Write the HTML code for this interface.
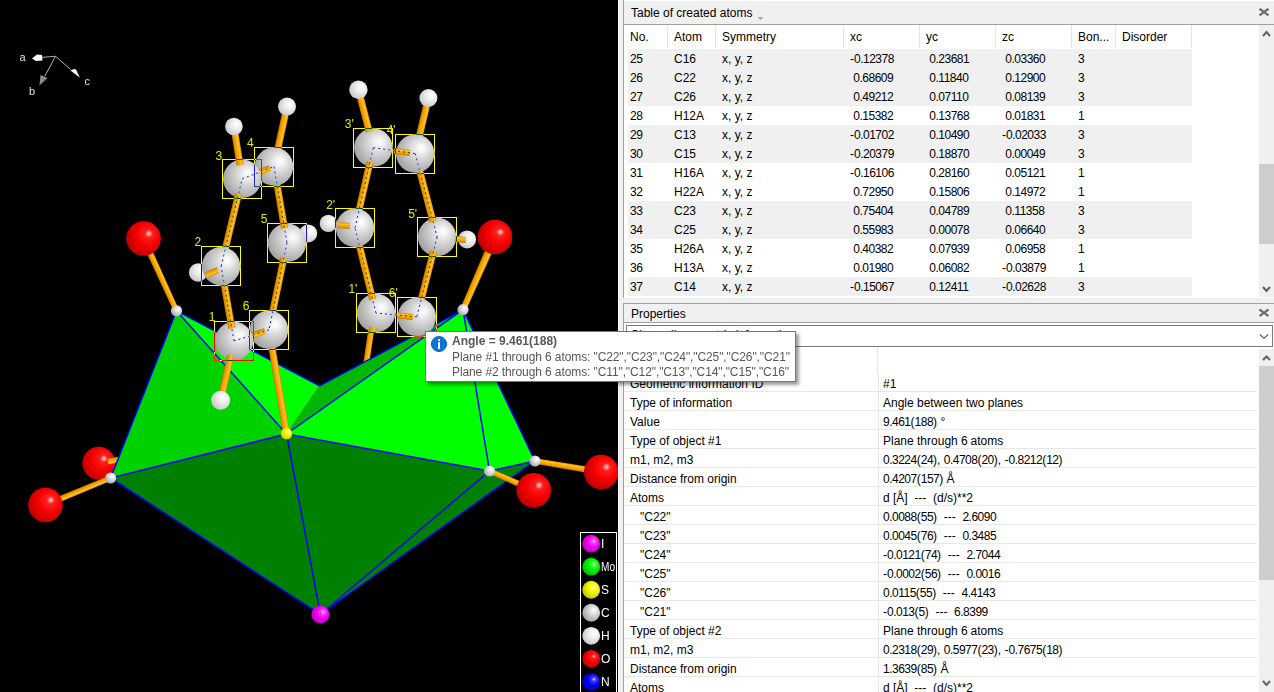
<!DOCTYPE html>
<html><head><meta charset="utf-8"><style>
html,body{margin:0;padding:0}
body{width:1274px;height:692px;overflow:hidden;position:relative;background:#f0f0f0;font-family:"Liberation Sans",sans-serif}
#view{position:absolute;left:0;top:0;width:618px;height:692px;background:#000;overflow:hidden}
.t{position:absolute;font-size:12px;line-height:14px;color:#000;white-space:pre}
.b{font-weight:bold;color:#575757}
.g{color:#575757}
.n{letter-spacing:-0.5px}
.box{position:absolute;box-sizing:border-box;border-left:1px solid #a0a0a0;border-top:1px solid #a0a0a0;background:#fff}
#tip{position:absolute;left:425px;top:331px;width:369px;height:49px;background:#fff;border:1px solid #767676;box-shadow:3px 3px 3px rgba(0,0,0,0.38)}
.lb{font-family:"Liberation Sans",sans-serif;font-size:12px;fill:#e8e800}
.ax{font-family:"Liberation Sans",sans-serif;font-size:11px;fill:#e0e0e0}
.lg{font-family:"Liberation Sans",sans-serif;font-size:12px;fill:#ffffff}
</style></head><body>
<div id="view"><svg width="618" height="692" viewBox="0 0 618 692" style="position:absolute;left:0;top:0"><defs><radialGradient id="gC" cx="0.6" cy="0.42" r="0.78" fx="0.66" fy="0.35">
<stop offset="0" stop-color="#ffffff"/><stop offset="0.14" stop-color="#f2f2f2"/><stop offset="0.42" stop-color="#cfcfcf"/><stop offset="0.8" stop-color="#a4a4a4"/><stop offset="1" stop-color="#848484"/></radialGradient><radialGradient id="gV" cx="0.6" cy="0.42" r="0.78" fx="0.66" fy="0.35">
<stop offset="0" stop-color="#ffffff"/><stop offset="0.14" stop-color="#f2f2f2"/><stop offset="0.42" stop-color="#d8d8d8"/><stop offset="0.8" stop-color="#a8a8a8"/><stop offset="1" stop-color="#888888"/></radialGradient><radialGradient id="gH" cx="0.6" cy="0.42" r="0.78" fx="0.66" fy="0.35">
<stop offset="0" stop-color="#ffffff"/><stop offset="0.14" stop-color="#fafafa"/><stop offset="0.42" stop-color="#e8e8e8"/><stop offset="0.8" stop-color="#c8c8c8"/><stop offset="1" stop-color="#a8a8a8"/></radialGradient><radialGradient id="gO" cx="0.6" cy="0.42" r="0.78" fx="0.66" fy="0.35">
<stop offset="0" stop-color="#ffe0e0"/><stop offset="0.14" stop-color="#ff2020"/><stop offset="0.42" stop-color="#f80000"/><stop offset="0.8" stop-color="#c00000"/><stop offset="1" stop-color="#780000"/></radialGradient><radialGradient id="gI" cx="0.6" cy="0.42" r="0.78" fx="0.66" fy="0.35">
<stop offset="0" stop-color="#ffe0ff"/><stop offset="0.14" stop-color="#ff40ff"/><stop offset="0.42" stop-color="#f000f0"/><stop offset="0.8" stop-color="#c000c0"/><stop offset="1" stop-color="#880088"/></radialGradient><radialGradient id="gMo" cx="0.6" cy="0.42" r="0.78" fx="0.66" fy="0.35">
<stop offset="0" stop-color="#e0ffe0"/><stop offset="0.14" stop-color="#40ff40"/><stop offset="0.42" stop-color="#00f000"/><stop offset="0.8" stop-color="#00c000"/><stop offset="1" stop-color="#008800"/></radialGradient><radialGradient id="gS" cx="0.6" cy="0.42" r="0.78" fx="0.66" fy="0.35">
<stop offset="0" stop-color="#ffffe0"/><stop offset="0.14" stop-color="#ffff40"/><stop offset="0.42" stop-color="#f0f000"/><stop offset="0.8" stop-color="#c8c800"/><stop offset="1" stop-color="#888800"/></radialGradient><radialGradient id="gN" cx="0.6" cy="0.42" r="0.78" fx="0.66" fy="0.35">
<stop offset="0" stop-color="#e0e0ff"/><stop offset="0.14" stop-color="#4040ff"/><stop offset="0.42" stop-color="#0000f0"/><stop offset="0.8" stop-color="#0000c0"/><stop offset="1" stop-color="#000088"/></radialGradient><linearGradient id="gMG" gradientUnits="userSpaceOnUse" x1="330" y1="400" x2="463" y2="310">
<stop offset="0" stop-color="#00b400"/><stop offset="0.6" stop-color="#00c800"/><stop offset="1" stop-color="#00e000"/></linearGradient>
</defs>
<circle cx="98.8" cy="463.3" r="16.5" fill="url(#gO)"/>
<linearGradient id="b1" gradientUnits="userSpaceOnUse" x1="115.98" y1="457.05" x2="117.02" y2="462.95"><stop offset="0" stop-color="#c07000"/><stop offset="0.25" stop-color="#ec9c00"/><stop offset="0.55" stop-color="#ffae00"/><stop offset="0.72" stop-color="#ffc438"/><stop offset="0.9" stop-color="#f4a400"/><stop offset="1" stop-color="#cc7c00"/></linearGradient>
<polygon points="107.48,458.55 124.48,455.55 125.52,461.45 108.52,464.45" fill="url(#b1)"/>
<linearGradient id="b2" gradientUnits="userSpaceOnUse" x1="366.03" y1="344.55" x2="371.97" y2="345.45"><stop offset="0" stop-color="#c07000"/><stop offset="0.25" stop-color="#ec9c00"/><stop offset="0.55" stop-color="#ffae00"/><stop offset="0.72" stop-color="#ffc438"/><stop offset="0.9" stop-color="#f4a400"/><stop offset="1" stop-color="#cc7c00"/></linearGradient>
<polygon points="369.03,324.55 363.03,364.55 368.97,365.45 374.97,325.45" fill="url(#b2)"/>
<polygon points="110.6,478 286.5,434 320.4,614.5" fill="#008000"/>
<polygon points="286.5,434 489.5,471 320.4,614.5" fill="#008000"/>
<polygon points="489.5,471 535,461 320.4,614.5" fill="#008000"/>
<polygon points="176.5,310.8 110.6,478 286.5,434" fill="#00d200"/>
<polygon points="176.5,310.8 319.5,385.8 286.5,434" fill="#00ff00"/>
<polygon points="286.5,434 319.5,385.8 463,309.7" fill="#00b800"/>
<polygon points="286.5,434 463,309.7 489.5,471" fill="#00ff00"/>
<polygon points="463,309.7 535,461 489.5,471" fill="#00ff00"/>
<line x1="176.5" y1="310.8" x2="110.6" y2="478" stroke="#0000ff" stroke-width="1.5"/>
<line x1="176.5" y1="310.8" x2="286.5" y2="434" stroke="#0000ff" stroke-width="1.5"/>
<line x1="110.6" y1="478" x2="286.5" y2="434" stroke="#0000ff" stroke-width="1.5"/>
<line x1="176.5" y1="310.8" x2="319.5" y2="385.8" stroke="#0000ff" stroke-width="1.5"/>
<line x1="319.5" y1="385.8" x2="463" y2="309.7" stroke="#0000ff" stroke-width="1.5"/>
<line x1="286.5" y1="434" x2="463" y2="309.7" stroke="#0000ff" stroke-width="1.5"/>
<line x1="286.5" y1="434" x2="489.5" y2="471" stroke="#0000ff" stroke-width="1.5"/>
<line x1="463" y1="309.7" x2="489.5" y2="471" stroke="#0000ff" stroke-width="1.5"/>
<line x1="463" y1="309.7" x2="535" y2="461" stroke="#0000ff" stroke-width="1.5"/>
<line x1="489.5" y1="471" x2="535" y2="461" stroke="#0000ff" stroke-width="1.5"/>
<line x1="286.5" y1="434" x2="320.4" y2="614.5" stroke="#0000ff" stroke-width="1.5"/>
<line x1="110.6" y1="478" x2="320.4" y2="614.5" stroke="#0000ff" stroke-width="1.5"/>
<line x1="489.5" y1="471" x2="320.4" y2="614.5" stroke="#0000ff" stroke-width="1.5"/>
<line x1="535" y1="461" x2="320.4" y2="614.5" stroke="#0000ff" stroke-width="1.5"/>
<linearGradient id="b3" gradientUnits="userSpaceOnUse" x1="157.27" y1="275.90" x2="162.73" y2="273.40"><stop offset="0" stop-color="#c07000"/><stop offset="0.25" stop-color="#ec9c00"/><stop offset="0.55" stop-color="#ffae00"/><stop offset="0.72" stop-color="#ffc438"/><stop offset="0.9" stop-color="#f4a400"/><stop offset="1" stop-color="#cc7c00"/></linearGradient>
<polygon points="174.00,311.94 140.54,239.85 146.46,237.15 179.00,309.66" fill="url(#b3)"/>
<linearGradient id="b4" gradientUnits="userSpaceOnUse" x1="475.74" y1="271.94" x2="482.16" y2="274.76"><stop offset="0" stop-color="#c07000"/><stop offset="0.25" stop-color="#ec9c00"/><stop offset="0.55" stop-color="#ffae00"/><stop offset="0.72" stop-color="#ffc438"/><stop offset="0.9" stop-color="#f4a400"/><stop offset="1" stop-color="#cc7c00"/></linearGradient>
<polygon points="460.25,308.49 491.24,235.39 498.56,238.61 465.75,310.91" fill="url(#b4)"/>
<linearGradient id="b5" gradientUnits="userSpaceOnUse" x1="76.90" y1="488.84" x2="79.10" y2="494.16"><stop offset="0" stop-color="#c07000"/><stop offset="0.25" stop-color="#ec9c00"/><stop offset="0.55" stop-color="#ffae00"/><stop offset="0.72" stop-color="#ffc438"/><stop offset="0.9" stop-color="#f4a400"/><stop offset="1" stop-color="#cc7c00"/></linearGradient>
<polygon points="109.55,475.46 44.25,502.23 46.55,507.77 111.65,480.54" fill="url(#b5)"/>
<linearGradient id="b6" gradientUnits="userSpaceOnUse" x1="510.45" y1="483.24" x2="512.75" y2="477.96"><stop offset="0" stop-color="#c07000"/><stop offset="0.25" stop-color="#ec9c00"/><stop offset="0.55" stop-color="#ffae00"/><stop offset="0.72" stop-color="#ffc438"/><stop offset="0.9" stop-color="#f4a400"/><stop offset="1" stop-color="#cc7c00"/></linearGradient>
<polygon points="488.40,473.52 532.50,492.95 534.90,487.45 490.60,468.48" fill="url(#b6)"/>
<linearGradient id="b7" gradientUnits="userSpaceOnUse" x1="567.61" y1="469.46" x2="568.59" y2="463.54"><stop offset="0" stop-color="#c07000"/><stop offset="0.25" stop-color="#ec9c00"/><stop offset="0.55" stop-color="#ffae00"/><stop offset="0.72" stop-color="#ffc438"/><stop offset="0.9" stop-color="#f4a400"/><stop offset="1" stop-color="#cc7c00"/></linearGradient>
<polygon points="534.55,463.71 600.67,475.21 601.73,468.79 535.45,458.29" fill="url(#b7)"/>
<circle cx="143.5" cy="238.5" r="17.3" fill="url(#gO)"/>
<circle cx="494.9" cy="237" r="17.3" fill="url(#gO)"/>
<circle cx="45.4" cy="505" r="17.3" fill="url(#gO)"/>
<circle cx="533.7" cy="490.2" r="17.3" fill="url(#gO)"/>
<circle cx="601.2" cy="472" r="17.3" fill="url(#gO)"/>
<circle cx="176.5" cy="310.8" r="5.6" fill="url(#gV)"/>
<circle cx="110.6" cy="478" r="5.6" fill="url(#gV)"/>
<circle cx="489.5" cy="471" r="5.6" fill="url(#gV)"/>
<circle cx="463" cy="309.7" r="5.6" fill="url(#gV)"/>
<circle cx="535" cy="461" r="5.6" fill="url(#gV)"/>
<circle cx="320.4" cy="614.5" r="9" fill="url(#gI)"/>
<linearGradient id="b8" gradientUnits="userSpaceOnUse" x1="274.30" y1="382.48" x2="281.20" y2="381.32"><stop offset="0" stop-color="#c07000"/><stop offset="0.25" stop-color="#ec9c00"/><stop offset="0.55" stop-color="#ffae00"/><stop offset="0.72" stop-color="#ffc438"/><stop offset="0.9" stop-color="#f4a400"/><stop offset="1" stop-color="#cc7c00"/></linearGradient>
<polygon points="265.55,330.38 283.05,434.58 289.95,433.42 272.45,329.22" fill="url(#b8)"/>
<circle cx="286.5" cy="433.6" r="5.8" fill="url(#gS)"/>
<linearGradient id="b9" gradientUnits="userSpaceOnUse" x1="223.89" y1="369.88" x2="230.71" y2="371.42"><stop offset="0" stop-color="#c07000"/><stop offset="0.25" stop-color="#ec9c00"/><stop offset="0.55" stop-color="#ffae00"/><stop offset="0.72" stop-color="#ffc438"/><stop offset="0.9" stop-color="#f4a400"/><stop offset="1" stop-color="#cc7c00"/></linearGradient>
<polygon points="230.59,340.23 217.19,399.53 224.01,401.07 237.41,341.77" fill="url(#b9)"/>
<linearGradient id="b10" gradientUnits="userSpaceOnUse" x1="224.10" y1="304.19" x2="231.00" y2="303.01"><stop offset="0" stop-color="#c07000"/><stop offset="0.25" stop-color="#ec9c00"/><stop offset="0.55" stop-color="#ffae00"/><stop offset="0.72" stop-color="#ffc438"/><stop offset="0.9" stop-color="#f4a400"/><stop offset="1" stop-color="#cc7c00"/></linearGradient>
<polygon points="217.65,266.79 230.55,341.59 237.45,340.41 224.55,265.61" fill="url(#b10)"/>
<linearGradient id="b11" gradientUnits="userSpaceOnUse" x1="228.25" y1="221.68" x2="235.05" y2="223.32"><stop offset="0" stop-color="#c07000"/><stop offset="0.25" stop-color="#ec9c00"/><stop offset="0.55" stop-color="#ffae00"/><stop offset="0.72" stop-color="#ffc438"/><stop offset="0.9" stop-color="#f4a400"/><stop offset="1" stop-color="#cc7c00"/></linearGradient>
<polygon points="217.70,265.38 238.80,177.98 245.60,179.62 224.50,267.02" fill="url(#b11)"/>
<linearGradient id="b12" gradientUnits="userSpaceOnUse" x1="234.59" y1="153.20" x2="241.51" y2="152.10"><stop offset="0" stop-color="#c07000"/><stop offset="0.25" stop-color="#ec9c00"/><stop offset="0.55" stop-color="#ffae00"/><stop offset="0.72" stop-color="#ffc438"/><stop offset="0.9" stop-color="#f4a400"/><stop offset="1" stop-color="#cc7c00"/></linearGradient>
<polygon points="238.74,179.35 230.44,127.05 237.36,125.95 245.66,178.25" fill="url(#b12)"/>
<linearGradient id="b13" gradientUnits="userSpaceOnUse" x1="277.08" y1="135.86" x2="283.92" y2="137.34"><stop offset="0" stop-color="#c07000"/><stop offset="0.25" stop-color="#ec9c00"/><stop offset="0.55" stop-color="#ffae00"/><stop offset="0.72" stop-color="#ffc438"/><stop offset="0.9" stop-color="#f4a400"/><stop offset="1" stop-color="#cc7c00"/></linearGradient>
<polygon points="270.58,165.86 283.58,105.86 290.42,107.34 277.42,167.34" fill="url(#b13)"/>
<linearGradient id="b14" gradientUnits="userSpaceOnUse" x1="277.05" y1="205.29" x2="283.95" y2="204.11"><stop offset="0" stop-color="#c07000"/><stop offset="0.25" stop-color="#ec9c00"/><stop offset="0.55" stop-color="#ffae00"/><stop offset="0.72" stop-color="#ffc438"/><stop offset="0.9" stop-color="#f4a400"/><stop offset="1" stop-color="#cc7c00"/></linearGradient>
<polygon points="270.55,167.19 283.55,243.39 290.45,242.21 277.45,166.01" fill="url(#b14)"/>
<linearGradient id="b15" gradientUnits="userSpaceOnUse" x1="274.57" y1="285.59" x2="281.43" y2="287.01"><stop offset="0" stop-color="#c07000"/><stop offset="0.25" stop-color="#ec9c00"/><stop offset="0.55" stop-color="#ffae00"/><stop offset="0.72" stop-color="#ffc438"/><stop offset="0.9" stop-color="#f4a400"/><stop offset="1" stop-color="#cc7c00"/></linearGradient>
<polygon points="283.57,242.09 265.57,329.09 272.43,330.51 290.43,243.51" fill="url(#b15)"/>
<linearGradient id="b16" gradientUnits="userSpaceOnUse" x1="362.10" y1="271.24" x2="368.90" y2="269.56"><stop offset="0" stop-color="#c07000"/><stop offset="0.25" stop-color="#ec9c00"/><stop offset="0.55" stop-color="#ffae00"/><stop offset="0.72" stop-color="#ffc438"/><stop offset="0.9" stop-color="#f4a400"/><stop offset="1" stop-color="#cc7c00"/></linearGradient>
<polygon points="351.60,228.64 372.60,313.84 379.40,312.16 358.40,226.96" fill="url(#b16)"/>
<linearGradient id="b17" gradientUnits="userSpaceOnUse" x1="360.74" y1="186.92" x2="367.56" y2="188.48"><stop offset="0" stop-color="#c07000"/><stop offset="0.25" stop-color="#ec9c00"/><stop offset="0.55" stop-color="#ffae00"/><stop offset="0.72" stop-color="#ffc438"/><stop offset="0.9" stop-color="#f4a400"/><stop offset="1" stop-color="#cc7c00"/></linearGradient>
<polygon points="351.59,227.02 369.89,146.82 376.71,148.38 358.41,228.58" fill="url(#b17)"/>
<linearGradient id="b18" gradientUnits="userSpaceOnUse" x1="362.46" y1="119.52" x2="369.24" y2="117.78"><stop offset="0" stop-color="#c07000"/><stop offset="0.25" stop-color="#ec9c00"/><stop offset="0.55" stop-color="#ffae00"/><stop offset="0.72" stop-color="#ffc438"/><stop offset="0.9" stop-color="#f4a400"/><stop offset="1" stop-color="#cc7c00"/></linearGradient>
<polygon points="369.91,148.47 355.01,90.57 361.79,88.83 376.69,146.73" fill="url(#b18)"/>
<linearGradient id="b19" gradientUnits="userSpaceOnUse" x1="418.39" y1="124.99" x2="425.21" y2="126.61"><stop offset="0" stop-color="#c07000"/><stop offset="0.25" stop-color="#ec9c00"/><stop offset="0.55" stop-color="#ffae00"/><stop offset="0.72" stop-color="#ffc438"/><stop offset="0.9" stop-color="#f4a400"/><stop offset="1" stop-color="#cc7c00"/></linearGradient>
<polygon points="411.79,152.79 424.99,97.19 431.81,98.81 418.61,154.41" fill="url(#b19)"/>
<linearGradient id="b20" gradientUnits="userSpaceOnUse" x1="422.76" y1="196.19" x2="429.54" y2="194.41"><stop offset="0" stop-color="#c07000"/><stop offset="0.25" stop-color="#ec9c00"/><stop offset="0.55" stop-color="#ffae00"/><stop offset="0.72" stop-color="#ffc438"/><stop offset="0.9" stop-color="#f4a400"/><stop offset="1" stop-color="#cc7c00"/></linearGradient>
<polygon points="411.81,154.49 433.71,237.89 440.49,236.11 418.59,152.71" fill="url(#b20)"/>
<linearGradient id="b21" gradientUnits="userSpaceOnUse" x1="423.56" y1="276.09" x2="430.34" y2="277.81"><stop offset="0" stop-color="#c07000"/><stop offset="0.25" stop-color="#ec9c00"/><stop offset="0.55" stop-color="#ffae00"/><stop offset="0.72" stop-color="#ffc438"/><stop offset="0.9" stop-color="#f4a400"/><stop offset="1" stop-color="#cc7c00"/></linearGradient>
<polygon points="433.71,236.14 413.41,316.04 420.19,317.76 440.49,237.86" fill="url(#b21)"/>
<circle cx="220.6" cy="400.3" r="9.5" fill="url(#gH)"/>
<circle cx="198.1" cy="272.5" r="9.2" fill="url(#gH)"/>
<circle cx="233.9" cy="126.5" r="8.8" fill="url(#gH)"/>
<circle cx="287" cy="106.6" r="9" fill="url(#gH)"/>
<circle cx="308.2" cy="233.4" r="9" fill="url(#gH)"/>
<circle cx="328.3" cy="223.4" r="8.6" fill="url(#gH)"/>
<circle cx="358.4" cy="89.7" r="9.2" fill="url(#gH)"/>
<circle cx="428.4" cy="98" r="9" fill="url(#gH)"/>
<circle cx="467.1" cy="239.4" r="9" fill="url(#gH)"/>
<circle cx="274" cy="166.6" r="19.2" fill="url(#gC)"/>
<circle cx="269" cy="329.8" r="19.2" fill="url(#gC)"/>
<circle cx="221.1" cy="266.2" r="19.2" fill="url(#gC)"/>
<circle cx="415.2" cy="153.6" r="19.2" fill="url(#gC)"/>
<circle cx="416.8" cy="316.9" r="19.2" fill="url(#gC)"/>
<circle cx="355" cy="227.8" r="19.2" fill="url(#gC)"/>
<linearGradient id="b22" gradientUnits="userSpaceOnUse" x1="262.42" y1="167.70" x2="264.58" y2="173.30"><stop offset="0" stop-color="#c07000"/><stop offset="0.25" stop-color="#ec9c00"/><stop offset="0.55" stop-color="#ffae00"/><stop offset="0.72" stop-color="#ffc438"/><stop offset="0.9" stop-color="#f4a400"/><stop offset="1" stop-color="#cc7c00"/></linearGradient>
<polygon points="255.92,170.20 268.92,165.20 271.08,170.80 258.08,175.80" fill="url(#b22)"/>
<linearGradient id="b23" gradientUnits="userSpaceOnUse" x1="256.99" y1="330.67" x2="259.01" y2="336.33"><stop offset="0" stop-color="#c07000"/><stop offset="0.25" stop-color="#ec9c00"/><stop offset="0.55" stop-color="#ffae00"/><stop offset="0.72" stop-color="#ffc438"/><stop offset="0.9" stop-color="#f4a400"/><stop offset="1" stop-color="#cc7c00"/></linearGradient>
<polygon points="249.99,333.17 263.99,328.17 266.01,333.83 252.01,338.83" fill="url(#b23)"/>
<linearGradient id="b24" gradientUnits="userSpaceOnUse" x1="401.63" y1="154.98" x2="402.37" y2="149.02"><stop offset="0" stop-color="#c07000"/><stop offset="0.25" stop-color="#ec9c00"/><stop offset="0.55" stop-color="#ffae00"/><stop offset="0.72" stop-color="#ffc438"/><stop offset="0.9" stop-color="#f4a400"/><stop offset="1" stop-color="#cc7c00"/></linearGradient>
<polygon points="393.63,153.98 409.63,155.98 410.37,150.02 394.37,148.02" fill="url(#b24)"/>
<linearGradient id="b25" gradientUnits="userSpaceOnUse" x1="405.20" y1="319.24" x2="405.80" y2="313.26"><stop offset="0" stop-color="#c07000"/><stop offset="0.25" stop-color="#ec9c00"/><stop offset="0.55" stop-color="#ffae00"/><stop offset="0.72" stop-color="#ffc438"/><stop offset="0.9" stop-color="#f4a400"/><stop offset="1" stop-color="#cc7c00"/></linearGradient>
<polygon points="397.70,318.49 412.70,319.99 413.30,314.01 398.30,312.51" fill="url(#b25)"/>
<circle cx="242.2" cy="178.8" r="19.2" fill="url(#gC)"/>
<circle cx="287" cy="242.8" r="19.2" fill="url(#gC)"/>
<circle cx="234" cy="341" r="19.2" fill="url(#gC)"/>
<circle cx="373.3" cy="147.6" r="19.2" fill="url(#gC)"/>
<circle cx="437.1" cy="237" r="19.2" fill="url(#gC)"/>
<circle cx="376" cy="313" r="19.2" fill="url(#gC)"/>
<linearGradient id="b26" gradientUnits="userSpaceOnUse" x1="236.13" y1="162.85" x2="243.04" y2="161.76"><stop offset="0" stop-color="#c07000"/><stop offset="0.25" stop-color="#ec9c00"/><stop offset="0.55" stop-color="#ffae00"/><stop offset="0.72" stop-color="#ffc438"/><stop offset="0.9" stop-color="#f4a400"/><stop offset="1" stop-color="#cc7c00"/></linearGradient>
<polygon points="236.60,165.82 235.66,159.89 242.57,158.79 243.51,164.72" fill="url(#b26)"/>
<linearGradient id="b27" gradientUnits="userSpaceOnUse" x1="234.64" y1="195.18" x2="241.45" y2="196.83"><stop offset="0" stop-color="#c07000"/><stop offset="0.25" stop-color="#ec9c00"/><stop offset="0.55" stop-color="#ffae00"/><stop offset="0.72" stop-color="#ffc438"/><stop offset="0.9" stop-color="#f4a400"/><stop offset="1" stop-color="#cc7c00"/></linearGradient>
<polygon points="235.11,193.24 234.17,197.13 240.98,198.77 241.92,194.88" fill="url(#b27)"/>
<linearGradient id="b28" gradientUnits="userSpaceOnUse" x1="280.66" y1="226.43" x2="287.56" y2="225.26"><stop offset="0" stop-color="#c07000"/><stop offset="0.25" stop-color="#ec9c00"/><stop offset="0.55" stop-color="#ffae00"/><stop offset="0.72" stop-color="#ffc438"/><stop offset="0.9" stop-color="#f4a400"/><stop offset="1" stop-color="#cc7c00"/></linearGradient>
<polygon points="281.08,228.90 280.24,223.97 287.14,222.79 287.98,227.72" fill="url(#b28)"/>
<linearGradient id="b29" gradientUnits="userSpaceOnUse" x1="279.99" y1="259.42" x2="286.84" y2="260.84"><stop offset="0" stop-color="#c07000"/><stop offset="0.25" stop-color="#ec9c00"/><stop offset="0.55" stop-color="#ffae00"/><stop offset="0.72" stop-color="#ffc438"/><stop offset="0.9" stop-color="#f4a400"/><stop offset="1" stop-color="#cc7c00"/></linearGradient>
<polygon points="280.39,257.47 279.58,261.38 286.44,262.80 287.25,258.88" fill="url(#b29)"/>
<linearGradient id="b30" gradientUnits="userSpaceOnUse" x1="227.80" y1="325.63" x2="234.70" y2="324.44"><stop offset="0" stop-color="#c07000"/><stop offset="0.25" stop-color="#ec9c00"/><stop offset="0.55" stop-color="#ffae00"/><stop offset="0.72" stop-color="#ffc438"/><stop offset="0.9" stop-color="#f4a400"/><stop offset="1" stop-color="#cc7c00"/></linearGradient>
<polygon points="228.39,329.08 227.20,322.18 234.10,320.99 235.29,327.89" fill="url(#b30)"/>
<linearGradient id="b31" gradientUnits="userSpaceOnUse" x1="226.79" y1="357.01" x2="233.62" y2="358.55"><stop offset="0" stop-color="#c07000"/><stop offset="0.25" stop-color="#ec9c00"/><stop offset="0.55" stop-color="#ffae00"/><stop offset="0.72" stop-color="#ffc438"/><stop offset="0.9" stop-color="#f4a400"/><stop offset="1" stop-color="#cc7c00"/></linearGradient>
<polygon points="227.35,354.57 226.24,359.44 233.07,360.99 234.17,356.11" fill="url(#b31)"/>
<linearGradient id="b32" gradientUnits="userSpaceOnUse" x1="365.44" y1="131.09" x2="372.22" y2="129.34"><stop offset="0" stop-color="#c07000"/><stop offset="0.25" stop-color="#ec9c00"/><stop offset="0.55" stop-color="#ffae00"/><stop offset="0.72" stop-color="#ffc438"/><stop offset="0.9" stop-color="#f4a400"/><stop offset="1" stop-color="#cc7c00"/></linearGradient>
<polygon points="365.87,132.78 365.00,129.39 371.78,127.65 372.65,131.04" fill="url(#b32)"/>
<linearGradient id="b33" gradientUnits="userSpaceOnUse" x1="366.06" y1="163.59" x2="372.89" y2="165.15"><stop offset="0" stop-color="#c07000"/><stop offset="0.25" stop-color="#ec9c00"/><stop offset="0.55" stop-color="#ffae00"/><stop offset="0.72" stop-color="#ffc438"/><stop offset="0.9" stop-color="#f4a400"/><stop offset="1" stop-color="#cc7c00"/></linearGradient>
<polygon points="366.62,161.15 365.51,166.03 372.33,167.58 373.44,162.71" fill="url(#b33)"/>
<linearGradient id="b34" gradientUnits="userSpaceOnUse" x1="429.22" y1="220.77" x2="435.99" y2="218.99"><stop offset="0" stop-color="#c07000"/><stop offset="0.25" stop-color="#ec9c00"/><stop offset="0.55" stop-color="#ffae00"/><stop offset="0.72" stop-color="#ffc438"/><stop offset="0.9" stop-color="#f4a400"/><stop offset="1" stop-color="#cc7c00"/></linearGradient>
<polygon points="429.73,222.70 428.71,218.83 435.48,217.06 436.50,220.93" fill="url(#b34)"/>
<linearGradient id="b35" gradientUnits="userSpaceOnUse" x1="429.47" y1="252.81" x2="436.26" y2="254.53"><stop offset="0" stop-color="#c07000"/><stop offset="0.25" stop-color="#ec9c00"/><stop offset="0.55" stop-color="#ffae00"/><stop offset="0.72" stop-color="#ffc438"/><stop offset="0.9" stop-color="#f4a400"/><stop offset="1" stop-color="#cc7c00"/></linearGradient>
<polygon points="430.09,250.39 428.86,255.23 435.64,256.96 436.87,252.11" fill="url(#b35)"/>
<linearGradient id="b36" gradientUnits="userSpaceOnUse" x1="368.61" y1="297.62" x2="375.40" y2="295.95"><stop offset="0" stop-color="#c07000"/><stop offset="0.25" stop-color="#ec9c00"/><stop offset="0.55" stop-color="#ffae00"/><stop offset="0.72" stop-color="#ffc438"/><stop offset="0.9" stop-color="#f4a400"/><stop offset="1" stop-color="#cc7c00"/></linearGradient>
<polygon points="369.32,300.54 367.89,294.71 374.68,293.03 376.12,298.86" fill="url(#b36)"/>
<linearGradient id="b37" gradientUnits="userSpaceOnUse" x1="369.31" y1="329.23" x2="376.19" y2="330.55"><stop offset="0" stop-color="#c07000"/><stop offset="0.25" stop-color="#ec9c00"/><stop offset="0.55" stop-color="#ffae00"/><stop offset="0.72" stop-color="#ffc438"/><stop offset="0.9" stop-color="#f4a400"/><stop offset="1" stop-color="#cc7c00"/></linearGradient>
<polygon points="369.79,326.77 368.84,331.68 375.72,333.01 376.66,328.10" fill="url(#b37)"/>
<linearGradient id="b38" gradientUnits="userSpaceOnUse" x1="210.85" y1="269.73" x2="213.15" y2="275.27"><stop offset="0" stop-color="#c07000"/><stop offset="0.25" stop-color="#ec9c00"/><stop offset="0.55" stop-color="#ffae00"/><stop offset="0.72" stop-color="#ffc438"/><stop offset="0.9" stop-color="#f4a400"/><stop offset="1" stop-color="#cc7c00"/></linearGradient>
<polygon points="204.85,272.23 216.85,267.23 219.15,272.77 207.15,277.77" fill="url(#b38)"/>
<linearGradient id="b39" gradientUnits="userSpaceOnUse" x1="343.75" y1="228.49" x2="344.25" y2="222.51"><stop offset="0" stop-color="#c07000"/><stop offset="0.25" stop-color="#ec9c00"/><stop offset="0.55" stop-color="#ffae00"/><stop offset="0.72" stop-color="#ffc438"/><stop offset="0.9" stop-color="#f4a400"/><stop offset="1" stop-color="#cc7c00"/></linearGradient>
<polygon points="337.75,227.99 349.75,228.99 350.25,223.01 338.25,222.01" fill="url(#b39)"/>
<linearGradient id="b40" gradientUnits="userSpaceOnUse" x1="460.23" y1="242.49" x2="460.77" y2="236.51"><stop offset="0" stop-color="#c07000"/><stop offset="0.25" stop-color="#ec9c00"/><stop offset="0.55" stop-color="#ffae00"/><stop offset="0.72" stop-color="#ffc438"/><stop offset="0.9" stop-color="#f4a400"/><stop offset="1" stop-color="#cc7c00"/></linearGradient>
<polygon points="454.73,241.99 465.73,242.99 466.27,237.01 455.27,236.01" fill="url(#b40)"/>
<line x1="234" y1="341" x2="221.1" y2="266.2" stroke="#ffff00" stroke-width="1" stroke-dasharray="2 3" style="mix-blend-mode:difference"/>
<line x1="221.1" y1="266.2" x2="242.2" y2="178.8" stroke="#ffff00" stroke-width="1" stroke-dasharray="2 3" style="mix-blend-mode:difference"/>
<line x1="242.2" y1="178.8" x2="274" y2="166.6" stroke="#ffff00" stroke-width="1" stroke-dasharray="2 3" style="mix-blend-mode:difference"/>
<line x1="274" y1="166.6" x2="287" y2="242.8" stroke="#ffff00" stroke-width="1" stroke-dasharray="2 3" style="mix-blend-mode:difference"/>
<line x1="287" y1="242.8" x2="269" y2="329.8" stroke="#ffff00" stroke-width="1" stroke-dasharray="2 3" style="mix-blend-mode:difference"/>
<line x1="269" y1="329.8" x2="234" y2="341" stroke="#ffff00" stroke-width="1" stroke-dasharray="2 3" style="mix-blend-mode:difference"/>
<line x1="376" y1="313" x2="355" y2="227.8" stroke="#ffff00" stroke-width="1" stroke-dasharray="2 3" style="mix-blend-mode:difference"/>
<line x1="355" y1="227.8" x2="373.3" y2="147.6" stroke="#ffff00" stroke-width="1" stroke-dasharray="2 3" style="mix-blend-mode:difference"/>
<line x1="373.3" y1="147.6" x2="415.2" y2="153.6" stroke="#ffff00" stroke-width="1" stroke-dasharray="2 3" style="mix-blend-mode:difference"/>
<line x1="415.2" y1="153.6" x2="437.1" y2="237" stroke="#ffff00" stroke-width="1" stroke-dasharray="2 3" style="mix-blend-mode:difference"/>
<line x1="437.1" y1="237" x2="416.8" y2="316.9" stroke="#ffff00" stroke-width="1" stroke-dasharray="2 3" style="mix-blend-mode:difference"/>
<line x1="416.8" y1="316.9" x2="376" y2="313" stroke="#ffff00" stroke-width="1" stroke-dasharray="2 3" style="mix-blend-mode:difference"/>
<rect x="214.5" y="321.5" width="39" height="39" fill="none" stroke="#ffff00" stroke-width="1" style="mix-blend-mode:difference"/>
<rect x="201.5" y="246.5" width="39" height="39" fill="none" stroke="#ffff00" stroke-width="1" style="mix-blend-mode:difference"/>
<rect x="222.5" y="159.5" width="39" height="39" fill="none" stroke="#ffff00" stroke-width="1" style="mix-blend-mode:difference"/>
<rect x="254.5" y="147.5" width="39" height="39" fill="none" stroke="#ffff00" stroke-width="1" style="mix-blend-mode:difference"/>
<rect x="267.5" y="223.5" width="39" height="39" fill="none" stroke="#ffff00" stroke-width="1" style="mix-blend-mode:difference"/>
<rect x="249.5" y="310.5" width="39" height="39" fill="none" stroke="#ffff00" stroke-width="1" style="mix-blend-mode:difference"/>
<rect x="356.5" y="293.5" width="39" height="39" fill="none" stroke="#ffff00" stroke-width="1" style="mix-blend-mode:difference"/>
<rect x="335.5" y="208.5" width="39" height="39" fill="none" stroke="#ffff00" stroke-width="1" style="mix-blend-mode:difference"/>
<rect x="353.5" y="128.5" width="39" height="39" fill="none" stroke="#ffff00" stroke-width="1" style="mix-blend-mode:difference"/>
<rect x="395.5" y="134.5" width="39" height="39" fill="none" stroke="#ffff00" stroke-width="1" style="mix-blend-mode:difference"/>
<rect x="417.5" y="217.5" width="39" height="39" fill="none" stroke="#ffff00" stroke-width="1" style="mix-blend-mode:difference"/>
<rect x="397.5" y="297.5" width="39" height="39" fill="none" stroke="#ffff00" stroke-width="1" style="mix-blend-mode:difference"/>
<text x="215.5" y="159.8" class="lb">3</text>
<text x="247.0" y="147.2" class="lb">4</text>
<text x="194.6" y="245.8" class="lb">2</text>
<text x="260.8" y="223.2" class="lb">5</text>
<text x="208.8" y="321.1" class="lb">1</text>
<text x="242.7" y="310.0" class="lb">6</text>
<text x="344.8" y="128.0" class="lb">3'</text>
<text x="386.7" y="134.1" class="lb">4'</text>
<text x="326.2" y="208.6" class="lb">2'</text>
<text x="408.2" y="217.7" class="lb">5'</text>
<text x="348.4" y="293.1" class="lb">1'</text>
<text x="388.8" y="297.4" class="lb">6'</text>
<g stroke="#b0b0b0" stroke-width="1" fill="none"><path d="M40 57.5 L55.5 56.3 L44.7 76.4 M55.5 56.3 L70.7 69.5"/></g>
<path d="M32 58.5 L37 54.5 L42 55 L42.5 60.5 L36 61 Z" fill="#ffffff"/>
<path d="M39.4 85.5 L40.5 75 L47.6 78 Z" fill="#8a8a8a"/>
<path d="M80 77.7 L70.5 70.5 L74 69 L76 69.5 Z" fill="#ffffff"/>
<text x="19.5" y="61" class="ax">a</text><text x="29" y="95" class="ax">b</text><text x="84.5" y="85" class="ax">c</text>
<rect x="580.5" y="532.5" width="36" height="162" fill="#000" stroke="#ffffff" stroke-width="1"/>
<circle cx="591.2" cy="543.7" r="8.9" fill="url(#gI)"/>
<text x="601" y="548.0" class="lg">I</text>
<circle cx="591.2" cy="566.72" r="8.9" fill="url(#gMo)"/>
<text x="601" y="571.0" class="lg" textLength="14" lengthAdjust="spacingAndGlyphs">Mo</text>
<circle cx="591.2" cy="589.74" r="8.9" fill="url(#gS)"/>
<text x="601" y="594.0" class="lg">S</text>
<circle cx="591.2" cy="612.76" r="8.9" fill="url(#gC)"/>
<text x="601" y="617.1" class="lg">C</text>
<circle cx="591.2" cy="635.7800000000001" r="8.9" fill="url(#gH)"/>
<text x="601" y="640.1" class="lg">H</text>
<circle cx="591.2" cy="658.8000000000001" r="8.9" fill="url(#gO)"/>
<text x="601" y="663.1" class="lg">O</text>
<circle cx="591.2" cy="681.82" r="8.9" fill="url(#gN)"/>
<text x="601" y="686.1" class="lg">N</text></svg></div>
<div style="position:absolute;left:618px;top:0;width:1px;height:692px;background:#fcfcfc"></div>
<div class="box" style="left:623px;top:0px;width:651px;height:298px;border-top:none"></div>
<div style="position:absolute;left:624px;top:1px;width:650px;height:23px;background:#f0f0f0"></div>
<div style="position:absolute;left:623px;top:24px;width:651px;height:1px;background:#a0a0a0"></div>
<div class="t" style="left:631px;top:6px">Table of created atoms</div>
<svg style="position:absolute;left:757px;top:16px" width="8" height="6"><path d="M0.5 1 L6.5 1 L3.5 4.2 Z" fill="#a8a8a8"/></svg>
<svg style="position:absolute;left:1257px;top:5px" width="14" height="14"><path d="M2.5 3.8 L11.5 10.4 M11.5 3.8 L2.5 10.4" stroke="#707070" stroke-width="2.3"/></svg>
<div style="position:absolute;left:624px;top:25px;width:635px;height:272px;background:#fff;overflow:hidden">
<div style="position:absolute;left:43px;top:0px;width:1px;height:23px;background:#e5e5e5"></div>
<div style="position:absolute;left:91px;top:0px;width:1px;height:23px;background:#e5e5e5"></div>
<div style="position:absolute;left:219px;top:0px;width:1px;height:23px;background:#e5e5e5"></div>
<div style="position:absolute;left:295px;top:0px;width:1px;height:23px;background:#e5e5e5"></div>
<div style="position:absolute;left:371px;top:0px;width:1px;height:23px;background:#e5e5e5"></div>
<div style="position:absolute;left:447px;top:0px;width:1px;height:23px;background:#e5e5e5"></div>
<div style="position:absolute;left:491px;top:0px;width:1px;height:23px;background:#e5e5e5"></div>
<div style="position:absolute;left:567px;top:0px;width:1px;height:23px;background:#e5e5e5"></div>
<div class="t" style="left:6px;top:5px">No.</div>
<div class="t" style="left:50px;top:5px">Atom</div>
<div class="t" style="left:98px;top:5px">Symmetry</div>
<div class="t" style="left:226px;top:5px">xc</div>
<div class="t" style="left:302px;top:5px">yc</div>
<div class="t" style="left:378px;top:5px">zc</div>
<div class="t" style="left:454px;top:5px">Bon...</div>
<div class="t" style="left:498px;top:5px">Disorder</div>
<div style="position:absolute;left:4px;top:24px;width:564px;height:19px;background:#f0f0f0"></div>
<div class="t" style="left:6px;top:27px"><span class="n">25</span></div>
<div class="t" style="left:50px;top:27px">C16</div>
<div class="t" style="left:98px;top:27px">x, y, z</div>
<div class="t" style="left:226px;top:27px">-<span class="n">0.12378</span></div>
<div class="t" style="left:302px;top:27px"> <span class="n">0.23681</span></div>
<div class="t" style="left:378px;top:27px"> <span class="n">0.03360</span></div>
<div class="t" style="left:454px;top:27px"><span class="n">3</span></div>
<div style="position:absolute;left:4px;top:43px;width:564px;height:19px;background:#f0f0f0"></div>
<div class="t" style="left:6px;top:46px"><span class="n">26</span></div>
<div class="t" style="left:50px;top:46px">C22</div>
<div class="t" style="left:98px;top:46px">x, y, z</div>
<div class="t" style="left:226px;top:46px"> <span class="n">0.68609</span></div>
<div class="t" style="left:302px;top:46px"> <span class="n">0.11840</span></div>
<div class="t" style="left:378px;top:46px"> <span class="n">0.12900</span></div>
<div class="t" style="left:454px;top:46px"><span class="n">3</span></div>
<div style="position:absolute;left:4px;top:62px;width:564px;height:19px;background:#f0f0f0"></div>
<div class="t" style="left:6px;top:65px"><span class="n">27</span></div>
<div class="t" style="left:50px;top:65px">C26</div>
<div class="t" style="left:98px;top:65px">x, y, z</div>
<div class="t" style="left:226px;top:65px"> <span class="n">0.49212</span></div>
<div class="t" style="left:302px;top:65px"> <span class="n">0.07110</span></div>
<div class="t" style="left:378px;top:65px"> <span class="n">0.08139</span></div>
<div class="t" style="left:454px;top:65px"><span class="n">3</span></div>
<div class="t" style="left:6px;top:84px"><span class="n">28</span></div>
<div class="t" style="left:50px;top:84px">H12A</div>
<div class="t" style="left:98px;top:84px">x, y, z</div>
<div class="t" style="left:226px;top:84px"> <span class="n">0.15382</span></div>
<div class="t" style="left:302px;top:84px"> <span class="n">0.13768</span></div>
<div class="t" style="left:378px;top:84px"> <span class="n">0.01831</span></div>
<div class="t" style="left:454px;top:84px"><span class="n">1</span></div>
<div style="position:absolute;left:4px;top:100px;width:564px;height:19px;background:#f0f0f0"></div>
<div class="t" style="left:6px;top:103px"><span class="n">29</span></div>
<div class="t" style="left:50px;top:103px">C13</div>
<div class="t" style="left:98px;top:103px">x, y, z</div>
<div class="t" style="left:226px;top:103px">-<span class="n">0.01702</span></div>
<div class="t" style="left:302px;top:103px"> <span class="n">0.10490</span></div>
<div class="t" style="left:378px;top:103px">-<span class="n">0.02033</span></div>
<div class="t" style="left:454px;top:103px"><span class="n">3</span></div>
<div style="position:absolute;left:4px;top:119px;width:564px;height:19px;background:#f0f0f0"></div>
<div class="t" style="left:6px;top:122px"><span class="n">30</span></div>
<div class="t" style="left:50px;top:122px">C15</div>
<div class="t" style="left:98px;top:122px">x, y, z</div>
<div class="t" style="left:226px;top:122px">-<span class="n">0.20379</span></div>
<div class="t" style="left:302px;top:122px"> <span class="n">0.18870</span></div>
<div class="t" style="left:378px;top:122px"> <span class="n">0.00049</span></div>
<div class="t" style="left:454px;top:122px"><span class="n">3</span></div>
<div class="t" style="left:6px;top:141px"><span class="n">31</span></div>
<div class="t" style="left:50px;top:141px">H16A</div>
<div class="t" style="left:98px;top:141px">x, y, z</div>
<div class="t" style="left:226px;top:141px">-<span class="n">0.16106</span></div>
<div class="t" style="left:302px;top:141px"> <span class="n">0.28160</span></div>
<div class="t" style="left:378px;top:141px"> <span class="n">0.05121</span></div>
<div class="t" style="left:454px;top:141px"><span class="n">1</span></div>
<div class="t" style="left:6px;top:160px"><span class="n">32</span></div>
<div class="t" style="left:50px;top:160px">H22A</div>
<div class="t" style="left:98px;top:160px">x, y, z</div>
<div class="t" style="left:226px;top:160px"> <span class="n">0.72950</span></div>
<div class="t" style="left:302px;top:160px"> <span class="n">0.15806</span></div>
<div class="t" style="left:378px;top:160px"> <span class="n">0.14972</span></div>
<div class="t" style="left:454px;top:160px"><span class="n">1</span></div>
<div style="position:absolute;left:4px;top:176px;width:564px;height:19px;background:#f0f0f0"></div>
<div class="t" style="left:6px;top:179px"><span class="n">33</span></div>
<div class="t" style="left:50px;top:179px">C23</div>
<div class="t" style="left:98px;top:179px">x, y, z</div>
<div class="t" style="left:226px;top:179px"> <span class="n">0.75404</span></div>
<div class="t" style="left:302px;top:179px"> <span class="n">0.04789</span></div>
<div class="t" style="left:378px;top:179px"> <span class="n">0.11358</span></div>
<div class="t" style="left:454px;top:179px"><span class="n">3</span></div>
<div style="position:absolute;left:4px;top:195px;width:564px;height:19px;background:#f0f0f0"></div>
<div class="t" style="left:6px;top:198px"><span class="n">34</span></div>
<div class="t" style="left:50px;top:198px">C25</div>
<div class="t" style="left:98px;top:198px">x, y, z</div>
<div class="t" style="left:226px;top:198px"> <span class="n">0.55983</span></div>
<div class="t" style="left:302px;top:198px"> <span class="n">0.00078</span></div>
<div class="t" style="left:378px;top:198px"> <span class="n">0.06640</span></div>
<div class="t" style="left:454px;top:198px"><span class="n">3</span></div>
<div class="t" style="left:6px;top:217px"><span class="n">35</span></div>
<div class="t" style="left:50px;top:217px">H26A</div>
<div class="t" style="left:98px;top:217px">x, y, z</div>
<div class="t" style="left:226px;top:217px"> <span class="n">0.40382</span></div>
<div class="t" style="left:302px;top:217px"> <span class="n">0.07939</span></div>
<div class="t" style="left:378px;top:217px"> <span class="n">0.06958</span></div>
<div class="t" style="left:454px;top:217px"><span class="n">1</span></div>
<div class="t" style="left:6px;top:236px"><span class="n">36</span></div>
<div class="t" style="left:50px;top:236px">H13A</div>
<div class="t" style="left:98px;top:236px">x, y, z</div>
<div class="t" style="left:226px;top:236px"> <span class="n">0.01980</span></div>
<div class="t" style="left:302px;top:236px"> <span class="n">0.06082</span></div>
<div class="t" style="left:378px;top:236px">-<span class="n">0.03879</span></div>
<div class="t" style="left:454px;top:236px"><span class="n">1</span></div>
<div style="position:absolute;left:4px;top:252px;width:564px;height:19px;background:#f0f0f0"></div>
<div class="t" style="left:6px;top:255px"><span class="n">37</span></div>
<div class="t" style="left:50px;top:255px">C14</div>
<div class="t" style="left:98px;top:255px">x, y, z</div>
<div class="t" style="left:226px;top:255px">-<span class="n">0.15067</span></div>
<div class="t" style="left:302px;top:255px"> <span class="n">0.12411</span></div>
<div class="t" style="left:378px;top:255px">-<span class="n">0.02628</span></div>
<div class="t" style="left:454px;top:255px"><span class="n">3</span></div>
</div>
<div style="position:absolute;left:1259px;top:25px;width:15px;height:272px;background:#f0f0f0"></div>
<div style="position:absolute;left:1259px;top:164px;width:15px;height:80px;background:#cdcdcd"></div>
<svg style="position:absolute;left:1259px;top:25px" width="15" height="15"><path d="M4 11 L7.5 7 L11 11" stroke="#606060" stroke-width="2" fill="none"/></svg>
<svg style="position:absolute;left:1259px;top:281px" width="15" height="15"><path d="M4 6 L7.5 10 L11 6" stroke="#606060" stroke-width="2" fill="none"/></svg>
<div class="box" style="left:623px;top:303px;width:651px;height:389px;"></div>
<div style="position:absolute;left:624px;top:304px;width:650px;height:18px;background:#f0f0f0"></div>
<div style="position:absolute;left:623px;top:322px;width:651px;height:1px;background:#a0a0a0"></div>
<div class="t" style="left:631px;top:307px">Properties</div>
<svg style="position:absolute;left:1257px;top:305px" width="14" height="14"><path d="M2.5 4.5 L11.5 11.1 M11.5 4.5 L2.5 11.1" stroke="#707070" stroke-width="2.3"/></svg>
<div style="position:absolute;left:626px;top:325px;width:645px;height:20px;border:1px solid #7a7a7a;background:#fff"></div>
<div class="t" style="left:631px;top:328px">Show all geometric information</div>
<svg style="position:absolute;left:1257px;top:330px" width="14" height="12"><path d="M3 4.5 L7 8.5 L11 4.5" stroke="#606060" stroke-width="1.2" fill="none"/></svg>
<div style="position:absolute;left:624px;top:347px;width:635px;height:345px;background:#fff;overflow:hidden">
<div style="position:absolute;left:253px;top:1px;width:1px;height:26px;background:#e8e8e8"></div>
<div style="position:absolute;left:0px;top:44px;width:633px;height:1px;background:#e8e8e8"></div>
<div style="position:absolute;left:254px;top:26px;width:1px;height:19px;background:#e8e8e8"></div>
<div class="t" style="left:6px;top:30px">Geometric information ID</div>
<div class="t" style="left:259px;top:30px">#<span class="n">1</span></div>
<div style="position:absolute;left:0px;top:63px;width:633px;height:1px;background:#e8e8e8"></div>
<div style="position:absolute;left:254px;top:45px;width:1px;height:19px;background:#e8e8e8"></div>
<div class="t" style="left:6px;top:49px">Type of information</div>
<div class="t" style="left:259px;top:49px">Angle between two planes</div>
<div style="position:absolute;left:0px;top:82px;width:633px;height:1px;background:#e8e8e8"></div>
<div style="position:absolute;left:254px;top:64px;width:1px;height:19px;background:#e8e8e8"></div>
<div class="t" style="left:6px;top:68px">Value</div>
<div class="t" style="left:259px;top:68px"><span class="n">9.461</span>(<span class="n">188</span>) °</div>
<div style="position:absolute;left:0px;top:101px;width:633px;height:1px;background:#e8e8e8"></div>
<div style="position:absolute;left:254px;top:83px;width:1px;height:19px;background:#e8e8e8"></div>
<div class="t" style="left:6px;top:87px">Type of object #1</div>
<div class="t" style="left:259px;top:87px">Plane through <span class="n">6</span> atoms</div>
<div style="position:absolute;left:0px;top:120px;width:633px;height:1px;background:#e8e8e8"></div>
<div style="position:absolute;left:254px;top:102px;width:1px;height:19px;background:#e8e8e8"></div>
<div class="t" style="left:6px;top:106px">m1, m2, m3</div>
<div class="t" style="left:259px;top:106px"><span class="n">0.3224</span>(<span class="n">24</span>), <span class="n">0.4708</span>(<span class="n">20</span>), -<span class="n">0.8212</span>(<span class="n">12</span>)</div>
<div style="position:absolute;left:0px;top:139px;width:633px;height:1px;background:#e8e8e8"></div>
<div style="position:absolute;left:254px;top:121px;width:1px;height:19px;background:#e8e8e8"></div>
<div class="t" style="left:6px;top:125px">Distance from origin</div>
<div class="t" style="left:259px;top:125px"><span class="n">0.4207</span>(<span class="n">157</span>) Å</div>
<div style="position:absolute;left:0px;top:158px;width:633px;height:1px;background:#e8e8e8"></div>
<div style="position:absolute;left:254px;top:140px;width:1px;height:19px;background:#e8e8e8"></div>
<div class="t" style="left:6px;top:144px">Atoms</div>
<div class="t" style="left:259px;top:144px">d [Å]  ---  (d/s)**<span class="n">2</span></div>
<div style="position:absolute;left:0px;top:177px;width:633px;height:1px;background:#e8e8e8"></div>
<div style="position:absolute;left:254px;top:159px;width:1px;height:19px;background:#e8e8e8"></div>
<div class="t" style="left:6px;top:163px">   "C22"</div>
<div class="t" style="left:259px;top:163px"><span class="n">0.0088</span>(<span class="n">55</span>)  ---  <span class="n">2.6090</span></div>
<div style="position:absolute;left:0px;top:196px;width:633px;height:1px;background:#e8e8e8"></div>
<div style="position:absolute;left:254px;top:178px;width:1px;height:19px;background:#e8e8e8"></div>
<div class="t" style="left:6px;top:182px">   "C23"</div>
<div class="t" style="left:259px;top:182px"><span class="n">0.0045</span>(<span class="n">76</span>)  ---  <span class="n">0.3485</span></div>
<div style="position:absolute;left:0px;top:215px;width:633px;height:1px;background:#e8e8e8"></div>
<div style="position:absolute;left:254px;top:197px;width:1px;height:19px;background:#e8e8e8"></div>
<div class="t" style="left:6px;top:201px">   "C24"</div>
<div class="t" style="left:259px;top:201px">-<span class="n">0.0121</span>(<span class="n">74</span>)  ---  <span class="n">2.7044</span></div>
<div style="position:absolute;left:0px;top:234px;width:633px;height:1px;background:#e8e8e8"></div>
<div style="position:absolute;left:254px;top:216px;width:1px;height:19px;background:#e8e8e8"></div>
<div class="t" style="left:6px;top:220px">   "C25"</div>
<div class="t" style="left:259px;top:220px">-<span class="n">0.0002</span>(<span class="n">56</span>)  ---  <span class="n">0.0016</span></div>
<div style="position:absolute;left:0px;top:253px;width:633px;height:1px;background:#e8e8e8"></div>
<div style="position:absolute;left:254px;top:235px;width:1px;height:19px;background:#e8e8e8"></div>
<div class="t" style="left:6px;top:239px">   "C26"</div>
<div class="t" style="left:259px;top:239px"><span class="n">0.0115</span>(<span class="n">55</span>)  ---  <span class="n">4.4143</span></div>
<div style="position:absolute;left:0px;top:272px;width:633px;height:1px;background:#e8e8e8"></div>
<div style="position:absolute;left:254px;top:254px;width:1px;height:19px;background:#e8e8e8"></div>
<div class="t" style="left:6px;top:258px">   "C21"</div>
<div class="t" style="left:259px;top:258px">-<span class="n">0.013</span>(<span class="n">5</span>)  ---  <span class="n">6.8399</span></div>
<div style="position:absolute;left:0px;top:291px;width:633px;height:1px;background:#e8e8e8"></div>
<div style="position:absolute;left:254px;top:273px;width:1px;height:19px;background:#e8e8e8"></div>
<div class="t" style="left:6px;top:277px">Type of object #2</div>
<div class="t" style="left:259px;top:277px">Plane through <span class="n">6</span> atoms</div>
<div style="position:absolute;left:0px;top:310px;width:633px;height:1px;background:#e8e8e8"></div>
<div style="position:absolute;left:254px;top:292px;width:1px;height:19px;background:#e8e8e8"></div>
<div class="t" style="left:6px;top:296px">m1, m2, m3</div>
<div class="t" style="left:259px;top:296px"><span class="n">0.2318</span>(<span class="n">29</span>), <span class="n">0.5977</span>(<span class="n">23</span>), -<span class="n">0.7675</span>(<span class="n">18</span>)</div>
<div style="position:absolute;left:0px;top:329px;width:633px;height:1px;background:#e8e8e8"></div>
<div style="position:absolute;left:254px;top:311px;width:1px;height:19px;background:#e8e8e8"></div>
<div class="t" style="left:6px;top:315px">Distance from origin</div>
<div class="t" style="left:259px;top:315px"><span class="n">1.3639</span>(<span class="n">85</span>) Å</div>
<div style="position:absolute;left:0px;top:348px;width:633px;height:1px;background:#e8e8e8"></div>
<div style="position:absolute;left:254px;top:330px;width:1px;height:19px;background:#e8e8e8"></div>
<div class="t" style="left:6px;top:334px">Atoms</div>
<div class="t" style="left:259px;top:334px">d [Å]  ---  (d/s)**<span class="n">2</span></div>
</div>
<div style="position:absolute;left:1259px;top:349px;width:15px;height:343px;background:#f0f0f0"></div>
<div style="position:absolute;left:1259px;top:366px;width:15px;height:214px;background:#cdcdcd"></div>
<svg style="position:absolute;left:1259px;top:350px" width="15" height="15"><path d="M4 10 L7.5 6.5 L11 10" stroke="#606060" stroke-width="2" fill="none"/></svg>
<svg style="position:absolute;left:1259px;top:675px" width="15" height="15"><path d="M4 6 L7.5 10 L11 6" stroke="#606060" stroke-width="2" fill="none"/></svg>
<div id="tip"><svg style="position:absolute;left:4px;top:3px" width="20" height="20"><circle cx="9" cy="9" r="7.6" fill="#0a74d8" stroke="#0a5cb4" stroke-width="0.9"/><rect x="8" y="4.1" width="2" height="1.9" fill="#fff"/><rect x="8" y="7.2" width="2" height="6.8" fill="#fff"/></svg>
<div class="t b" style="left:26px;top:2px">Angle = 9.461(188)</div>
<div class="t g" style="left:26px;top:18px;letter-spacing:-0.1px">Plane #1 through 6 atoms: "C22","C23","C24","C25","C26","C21"</div>
<div class="t g" style="left:26px;top:33px;letter-spacing:-0.1px">Plane #2 through 6 atoms: "C11","C12","C13","C14","C15","C16"</div></div>
</body></html>
